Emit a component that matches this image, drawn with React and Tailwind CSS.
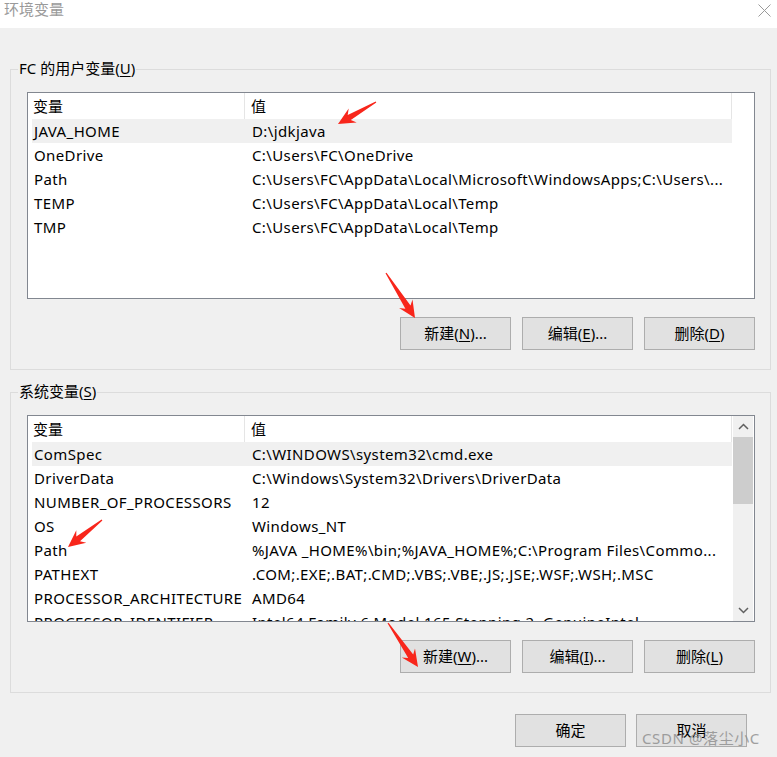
import React from "react";

const userVars = [
  ["JAVA_HOME", "D:\\jdkjava"],
  ["OneDrive", "C:\\Users\\FC\\OneDrive"],
  ["Path", "C:\\Users\\FC\\AppData\\Local\\Microsoft\\WindowsApps;C:\\Users\\..."],
  ["TEMP", "C:\\Users\\FC\\AppData\\Local\\Temp"],
  ["TMP", "C:\\Users\\FC\\AppData\\Local\\Temp"],
];

const sysVars = [
  ["ComSpec", "C:\\WINDOWS\\system32\\cmd.exe"],
  ["DriverData", "C:\\Windows\\System32\\Drivers\\DriverData"],
  ["NUMBER_OF_PROCESSORS", "12"],
  ["OS", "Windows_NT"],
  ["Path", "%JAVA _HOME%\\bin;%JAVA_HOME%;C:\\Program Files\\Commo..."],
  ["PATHEXT", ".COM;.EXE;.BAT;.CMD;.VBS;.VBE;.JS;.JSE;.WSF;.WSH;.MSC"],
  ["PROCESSOR_ARCHITECTURE", "AMD64"],
  ["PROCESSOR_IDENTIFIER", "Intel64 Family 6 Model 165 Stepping 2, GenuineIntel"],
];

const arrows = [
  { t: [376, 102], p: [338, 124] },
  { t: [386, 273], p: [415, 318] },
  { t: [102, 520], p: [68, 547] },
  { t: [388, 623], p: [418, 667] },
];

function arrowPoints(t, p) {
  const dx = p[0] - t[0];
  const dy = p[1] - t[1];
  const len = Math.hypot(dx, dy);
  const d = [dx / len, dy / len];
  const n = [-d[1], d[0]];
  const headLen = 16;
  const headHalf = 8;
  const shaftHalf = 3;
  const tailHalf = 0.6;
  const base = [p[0] - d[0] * headLen, p[1] - d[1] * headLen];
  const pt = (b, along, side) => [
    b[0] + d[0] * along + n[0] * side,
    b[1] + d[1] * along + n[1] * side,
  ];
  const pts = [
    pt(t, 0, tailHalf),
    pt(base, 3, shaftHalf),
    pt(base, -1, headHalf),
    p,
    pt(base, -1, -headHalf),
    pt(base, 3, -shaftHalf),
    pt(t, 0, -tailHalf),
  ];
  return pts.map((q) => q[0].toFixed(1) + "," + q[1].toFixed(1)).join(" ");
}

function Btn({ children, className = "" }) {
  return (
    <div
      className={
        "w-[111px] h-[33px] bg-[#e1e1e1] border border-[#adadad] flex items-center justify-center text-[15px] text-black " +
        className
      }
    >
      {children}
    </div>
  );
}

function U({ children }) {
  return <span className="underline underline-offset-2 decoration-1">{children}</span>;
}

function ScrollBar() {
  return (
    <div className="w-[20px] h-full bg-[#f0f0f0] flex flex-col shrink-0">
      <div className="h-[21px] flex items-center justify-center">
        <svg width="11" height="7" viewBox="0 0 11 7">
          <polyline points="1,6 5.5,1.5 10,6" fill="none" stroke="#606060" strokeWidth="1.5" />
        </svg>
      </div>
      <div className="h-[67px] bg-[#cdcdcd]" />
      <div className="flex-1" />
      <div className="h-[21px] flex items-center justify-center">
        <svg width="11" height="7" viewBox="0 0 11 7">
          <polyline points="1,1 5.5,5.5 10,1" fill="none" stroke="#606060" strokeWidth="1.5" />
        </svg>
      </div>
    </div>
  );
}

function ListBox({ rows, scroll }) {
  return (
    <div className="h-[207px] border border-[#828790] bg-white flex overflow-hidden">
      <div className="w-[704px] shrink-0 flex flex-col">
        <div className="h-[26px] flex shrink-0">
          <div className="w-[217px] border-r border-[#e5e5e5] pl-[5px] flex items-center">变量</div>
          <div className="flex-1 border-r border-[#e5e5e5] pl-[6px] flex items-center">值</div>
        </div>
        {rows.map(([k, v], i) => (
          <div
            key={k + i}
            className={
              "ml-[4px] w-[700px] h-[24px] shrink-0 flex items-center whitespace-nowrap tracking-[0.38px] " +
              (i === 0 ? "bg-[#f0f0f0]" : "")
            }
          >
            <div className="w-[212px] pl-[2px] overflow-hidden">{k}</div>
            <div className="flex-1 pl-[8px] overflow-hidden">{v}</div>
          </div>
        ))}
      </div>
      <div className="w-[1px] shrink-0" />
      {scroll ? <ScrollBar /> : null}
    </div>
  );
}

function Group({ label, rows, scroll, buttons, className = "" }) {
  return (
    <div className={"relative w-[761px] h-[301px] border border-[#dcdcdc] pt-[22px] pl-[16px] pr-[15px] " + className}>
      <div className="absolute left-[7px] top-[-12px] leading-[20px] px-[1px] bg-[#f0f0f0] text-[15px]">
        {label}
      </div>
      <ListBox rows={rows} scroll={scroll} />
      <div className="mt-[18px] flex justify-end gap-[11px]">{buttons}</div>
    </div>
  );
}

export default function App() {
  return (
    <div
      className="relative w-[777px] h-[757px] bg-[#f0f0f0] overflow-hidden text-[15px] text-black"
      style={{ fontFamily: '"Noto Sans", "Noto Sans CJK SC", sans-serif' }}
    >
      <div className="h-[28px] bg-white flex items-start justify-between pl-[4px] pr-[6px] pt-[1px]">
        <span className="text-[15px] text-[#9a9a9a] leading-[16px]">环境变量</span>
        <svg width="13" height="13" viewBox="0 0 13 13" className="mt-[3px]">
          <line x1="0.5" y1="0.5" x2="12.5" y2="12.5" stroke="#9a9a9a" strokeWidth="1" />
          <line x1="12.5" y1="0.5" x2="0.5" y2="12.5" stroke="#9a9a9a" strokeWidth="1" />
        </svg>
      </div>

      <div className="pl-[10px] pt-[41px]">
        <Group
          label={<>FC 的用户变量(<U>U</U>)</>}
          rows={userVars}
          scroll={false}
          buttons={
            <>
              <Btn>新建(<U>N</U>)...</Btn>
              <Btn>编辑(<U>E</U>)...</Btn>
              <Btn>删除(<U>D</U>)</Btn>
            </>
          }
        />
        <Group
          className="mt-[22px]"
          label={<>系统变量(<U>S</U>)</>}
          rows={sysVars}
          scroll={true}
          buttons={
            <>
              <Btn>新建(<U>W</U>)...</Btn>
              <Btn>编辑(<U>I</U>)...</Btn>
              <Btn>删除(<U>L</U>)</Btn>
            </>
          }
        />
        <div className="w-[761px] mt-[21px] pr-[24px] flex justify-end gap-[10px]">
          <Btn>确定</Btn>
          <Btn>取消</Btn>
        </div>
      </div>

      <svg className="absolute left-0 top-0 pointer-events-none" width="777" height="757">
        {arrows.map((a, i) => (
          <polygon key={i} points={arrowPoints(a.t, a.p)} fill="#f8261b" />
        ))}
      </svg>

      <div className="absolute left-[642px] top-[728px] text-[15px] leading-[20px] tracking-[0.6px] text-[#8c8c8c] opacity-80 whitespace-nowrap">
        CSDN @落尘小C
      </div>
    </div>
  );
}
